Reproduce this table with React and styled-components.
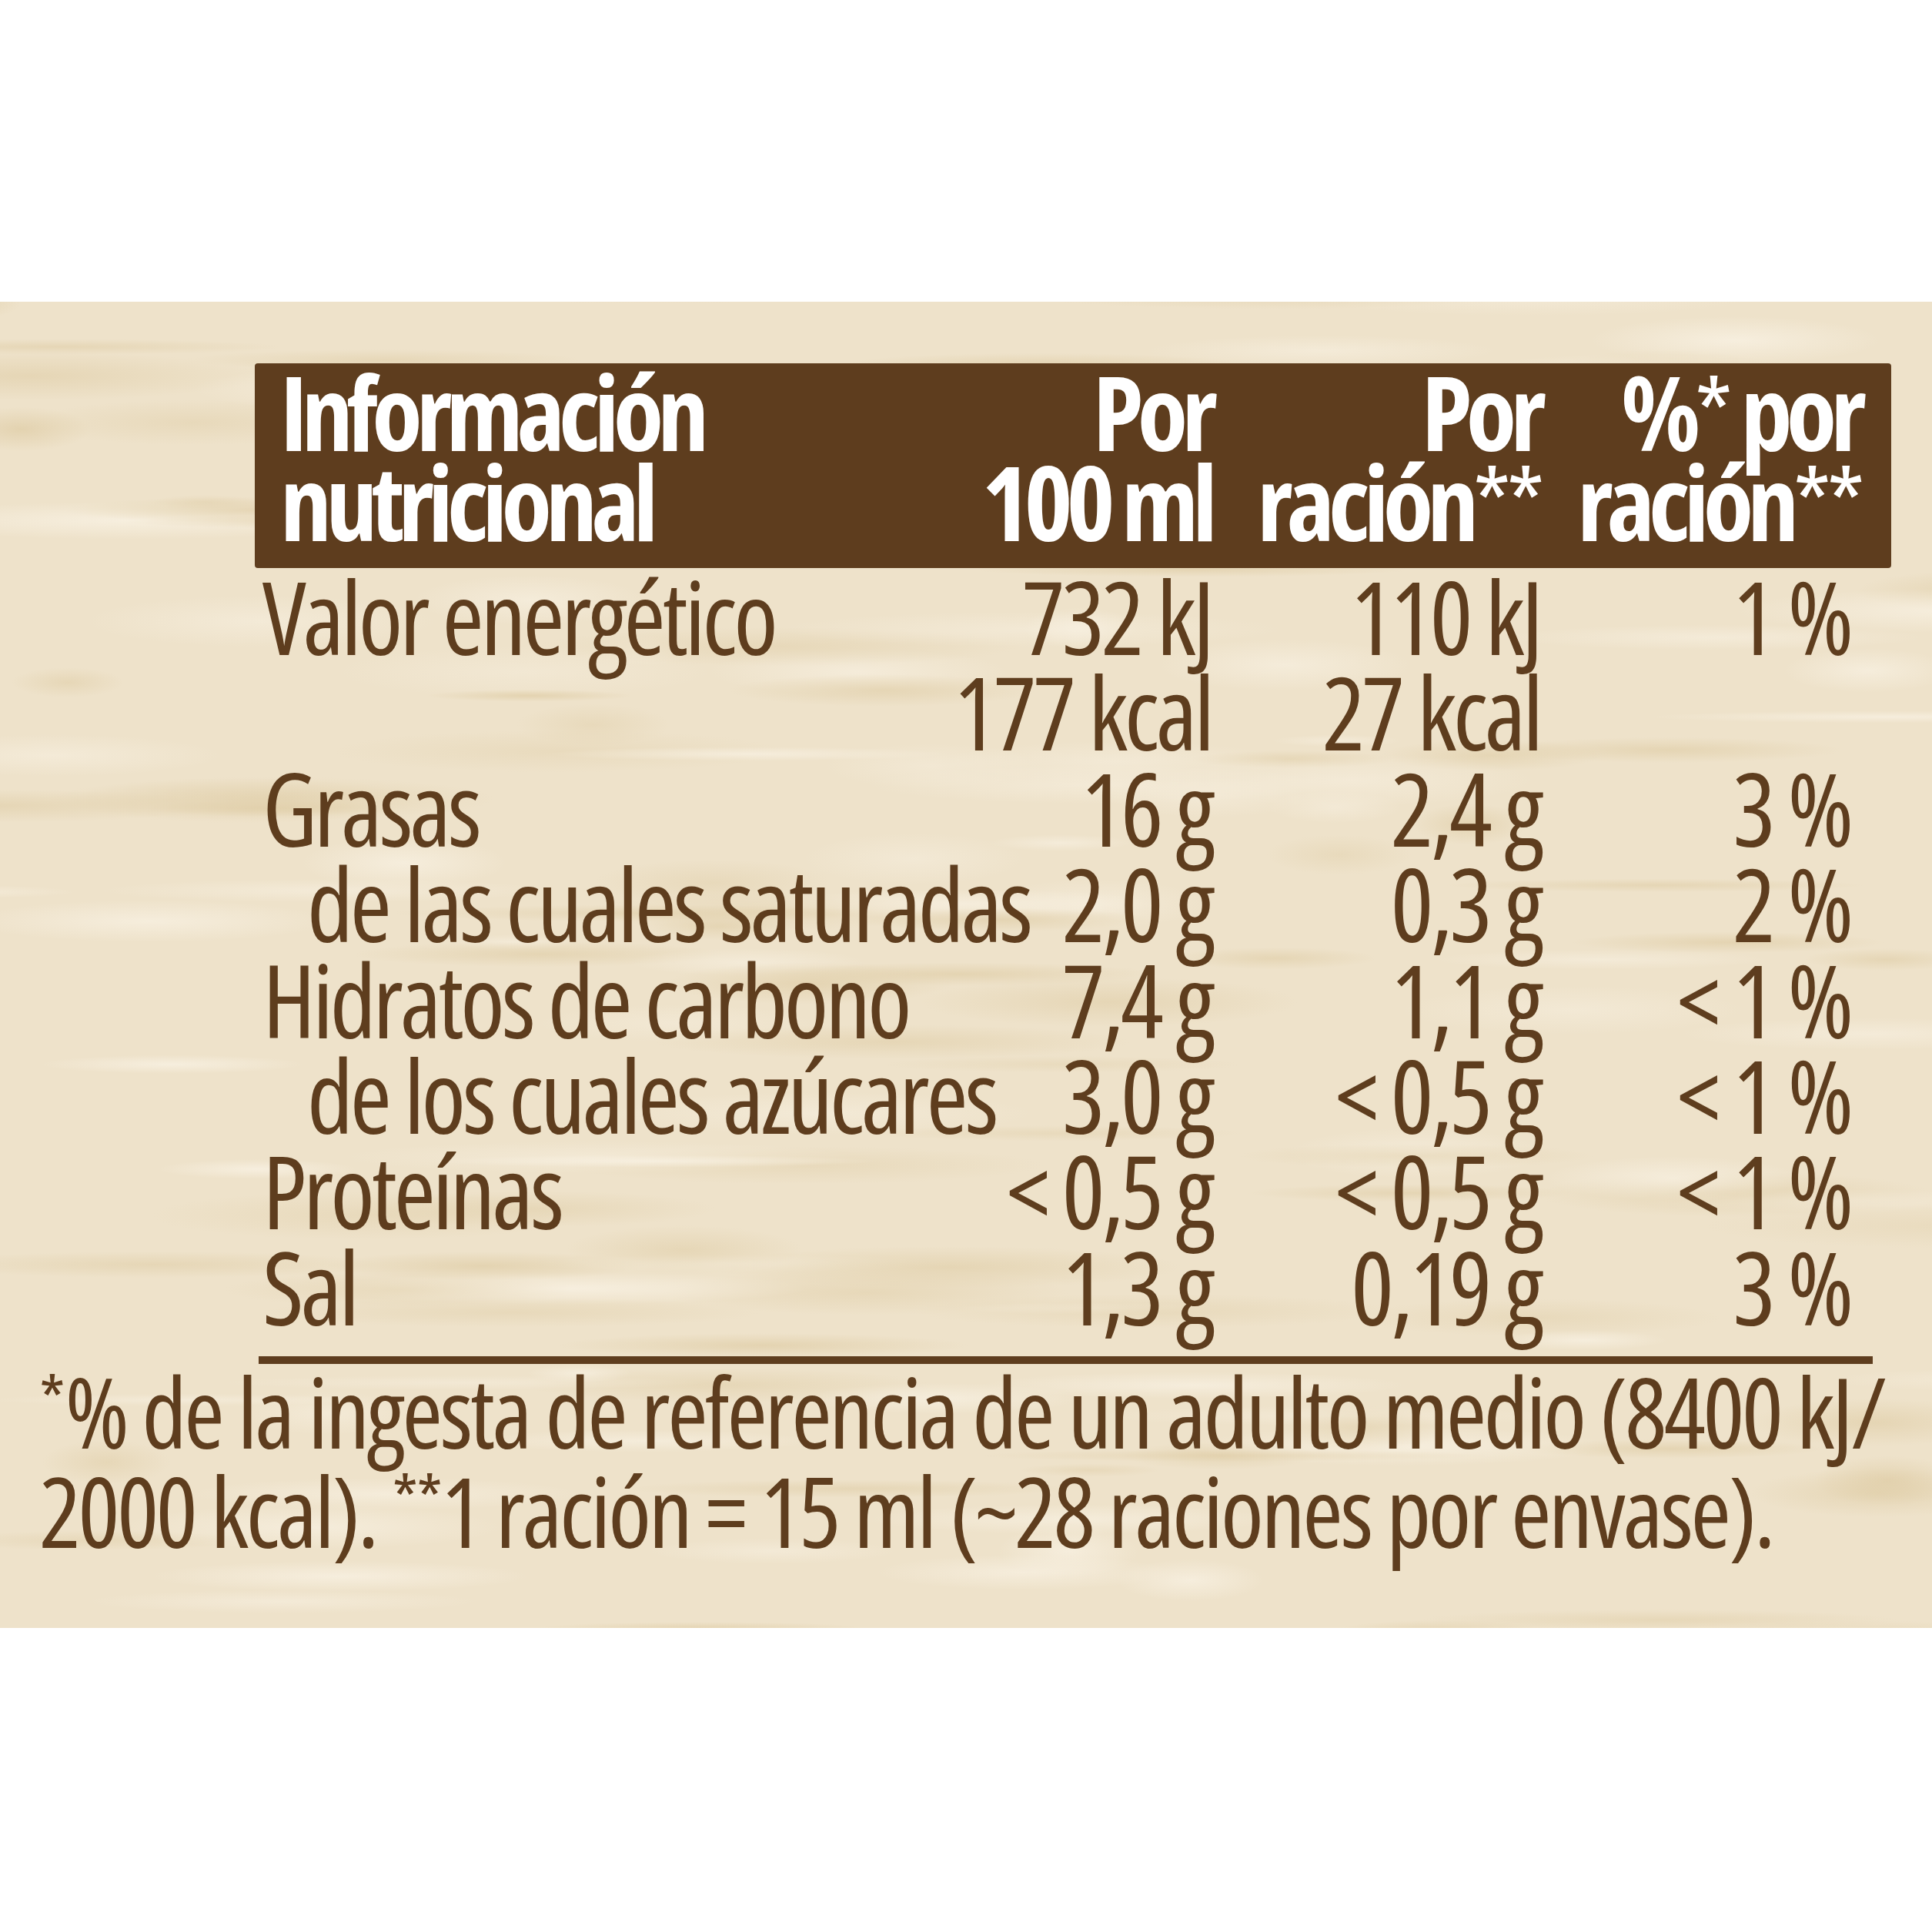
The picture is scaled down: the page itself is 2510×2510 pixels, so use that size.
import React from "react";
import styled, { createGlobalStyle } from "styled-components";

const BROWN = "#5e3d1e";

const GlobalStyle = createGlobalStyle`
  html, body { margin: 0; padding: 0; background: #ffffff; }
  body { font-family: "Open Sans", "Noto Sans", sans-serif; }
`;

function makeTexture() {
  let seed = 11;
  const rnd = () => {
    seed = (seed * 16807) % 2147483647;
    return seed / 2147483647;
  };
  const layers = [];
  for (let i = 0; i < 170; i++) {
    const x = (rnd() * 104 - 2).toFixed(1);
    const y = (rnd() * 104 - 2).toFixed(1);
    const w = Math.round(90 + rnd() * 380);
    const h = Math.round(10 + rnd() * 38);
    const light = rnd() > 0.5;
    const a = (0.35 + rnd() * 0.45).toFixed(2);
    const col = light ? `rgba(249, 242, 228, ${a})` : `rgba(224, 206, 168, ${a})`;
    layers.push(`radial-gradient(ellipse ${w}px ${h}px at ${x}% ${y}%, ${col}, transparent 72%)`);
  }
  return layers.join(",\n");
}

const texture = makeTexture();

const Page = styled.div`
  width: 2510px;
  height: 2510px;
  background: #ffffff;
  padding-top: 392px;
  box-sizing: border-box;
`;

const Panel = styled.section`
  width: 2510px;
  height: 1723px;
  box-sizing: border-box;
  padding-top: 80px;
  background-color: #eee2ca;
  background-image: ${(p) => p.$texture};
  color: ${BROWN};
  font-family: "Open Sans", "Noto Sans", sans-serif;
  font-stretch: 75%;
`;

const Table = styled.div`
  margin-left: 331px;
  width: 2126px;
`;

const Header = styled.div`
  display: grid;
  grid-template-columns: 1210px 427px 416px;
  padding: 4px 40px 28px 33px;
  background: ${BROWN};
  border-radius: 4px;
  color: #ffffff;
  font-weight: 700;
  font-size: 134px;
  line-height: 117px;
  letter-spacing: -7.8px;
`;

const SplitCell = styled.div`
  display: flex;
  justify-content: space-between;
  align-items: flex-start;
  white-space: nowrap;
`;

const RightCell = styled.div`
  text-align: right;
  white-space: nowrap;
`;

const Star = styled.span`
  font-size: ${(p) => p.$size || "0.95em"};
  line-height: 0;
  vertical-align: ${(p) => p.$raise || "0"};
  letter-spacing: ${(p) => p.$spacing || "-6px"};
  font-weight: 400;
`;

const Body = styled.div`
  margin-left: 10px;
`;

const Row = styled.div`
  display: grid;
  grid-template-columns: 1233px 427px 403px;
  font-size: 131px;
  line-height: 124.4px;
  letter-spacing: -4.2px;
  white-space: nowrap;
`;

const Label = styled.span`
  padding-left: ${(p) => (p.$indent ? "58px" : "0")};
`;

const Rule = styled.div`
  margin: 29px 0 0 5px;
  width: 2097px;
  height: 10px;
  background: ${BROWN};
`;

const Footnote = styled.p`
  margin: -4px 0 0 51px;
  font-size: 127px;
  line-height: 129px;
  letter-spacing: -3.4px;
  white-space: nowrap;
`;

const rows = [
  { label: "Valor energético", a: "732 kJ", b: "110 kJ", c: "1 %" },
  { label: "", a: "177 kcal", b: "27 kcal", c: "" },
  { label: "Grasas", a: "16 g", b: "2,4 g", c: "3 %" },
  { label: "de las cuales saturadas", indent: true, a: "2,0 g", b: "0,3 g", c: "2 %" },
  { label: "Hidratos de carbono", a: "7,4 g", b: "1,1 g", c: "< 1 %" },
  { label: "de los cuales azúcares", indent: true, a: "3,0 g", b: "< 0,5 g", c: "< 1 %" },
  { label: "Proteínas", a: "< 0,5 g", b: "< 0,5 g", c: "< 1 %" },
  { label: "Sal", a: "1,3 g", b: "0,19 g", c: "3 %" },
];

export default function App() {
  return (
    <Page>
      <GlobalStyle />
      <Panel $texture={texture}>
        <Table>
          <Header>
            <SplitCell>
              <span>
                Información
                <br />
                nutricional
              </span>
              <RightCell>
                Por
                <br />
                100 ml
              </RightCell>
            </SplitCell>
            <RightCell>
              Por
              <br />
              ración<Star>**</Star>
            </RightCell>
            <RightCell>
              %<Star>*</Star> por
              <br />
              ración<Star>**</Star>
            </RightCell>
          </Header>
          <Body>
            {rows.map((r, i) => (
              <Row key={i}>
                <SplitCell>
                  <Label $indent={r.indent}>{r.label}</Label>
                  <span>{r.a}</span>
                </SplitCell>
                <RightCell>{r.b}</RightCell>
                <RightCell>{r.c}</RightCell>
              </Row>
            ))}
          </Body>
          <Rule />
        </Table>
        <Footnote>
          <Star $size="0.68em" $raise="0.36em" $spacing="0">*</Star>% de la ingesta de referencia de un adulto medio (8400 kJ/
          <br />
          2000 kcal). <Star $size="0.68em" $raise="0.36em" $spacing="-2px">**</Star>1 ración = 15 ml (~28 raciones por envase).
        </Footnote>
      </Panel>
    </Page>
  );
}
